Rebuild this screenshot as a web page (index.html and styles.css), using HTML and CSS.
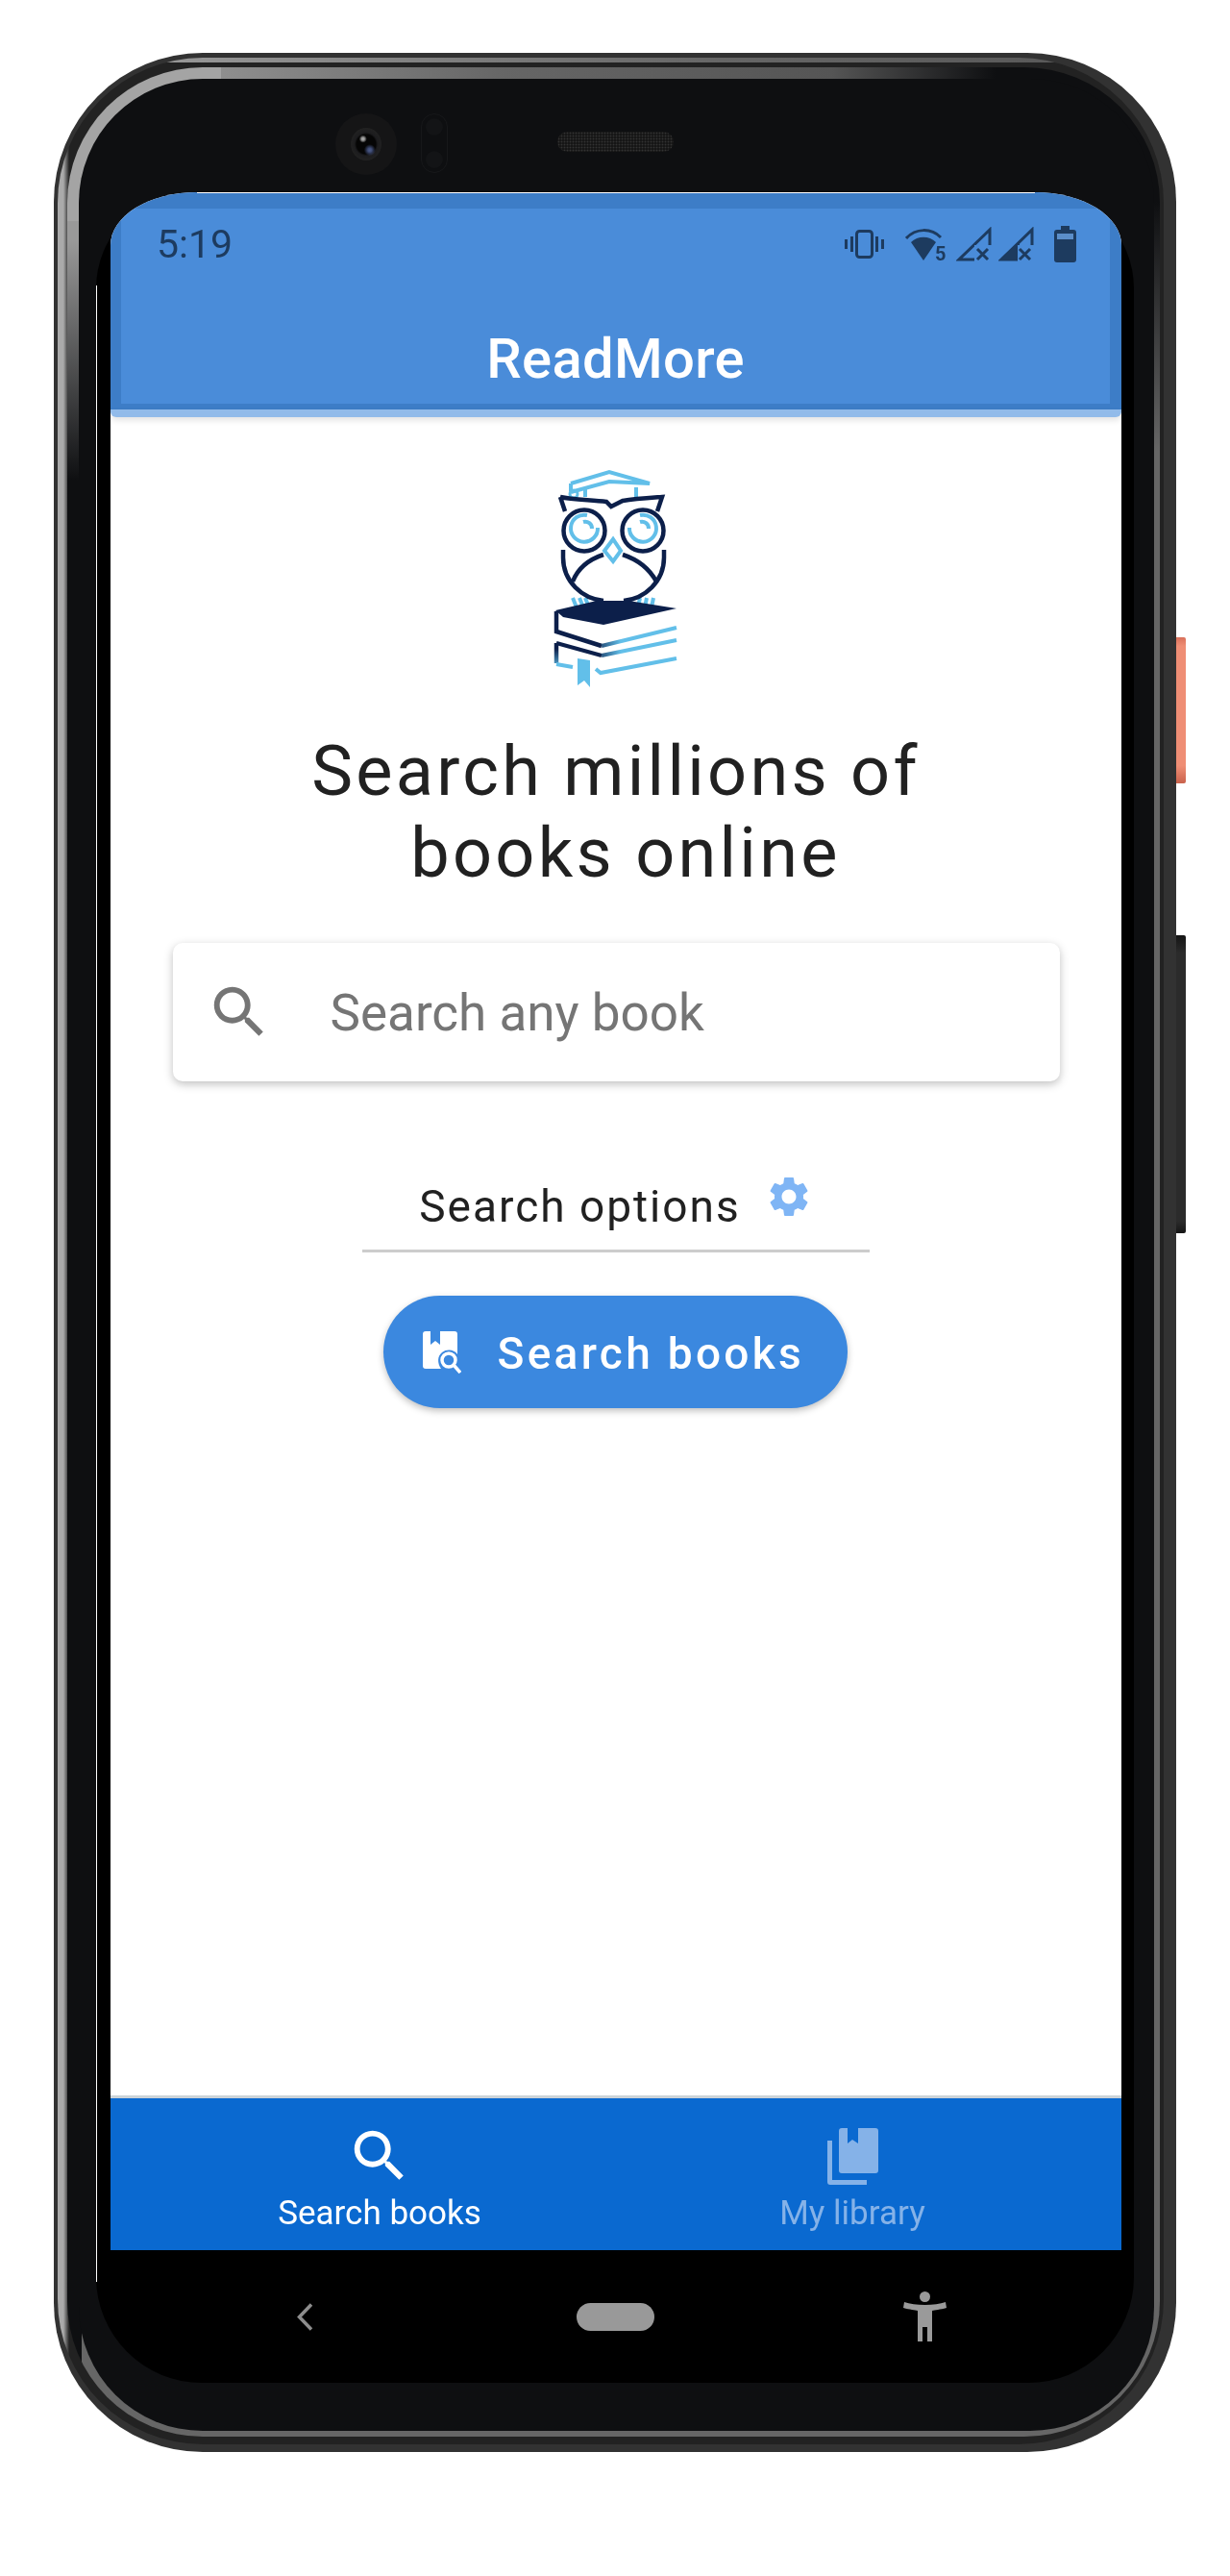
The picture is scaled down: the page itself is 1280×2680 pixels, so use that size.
FILE: index.html
```html
<!DOCTYPE html>
<html>
<head>
	<meta charset="utf-8">
	<title>ReadMore</title>
	<link rel="stylesheet" href="styles.css">
</head>
<body>
	<div class="phone">
		<div class="sideBtn power"></div>
		<div class="sideBtn volume"></div>
		<div class="rim">
			<div class="band">
				<div class="face">
					<div class="earpiece">
						<div class="camera"><div class="lens"></div></div>
						<div class="sensor"><span></span><span></span></div>
						<div class="speaker"></div>
					</div>
					<div class="display">
						<div class="screen">
							<div class="appbar">
								<div class="statusRow">
									<span class="clock">5:19</span>
									<div class="statusIcons">
										<svg class="icoVibrate" width="42" height="30" viewBox="0 0 42 30">
											<rect x="12.5" y="1.5" width="16" height="27" rx="3" fill="none" stroke="#1d3b5f" stroke-width="3"/>
											<path d="M0 10h3v10H0zM6 7h3v16H6zM32 7h3v16h-3zM38 10h3v10h-3z" fill="#1d3b5f"/>
										</svg>
										<svg class="icoWifi" width="44" height="41" viewBox="0 0 44 41">
											<path d="M1 11C11 0 27 0 37 10" fill="none" stroke="#1d3b5f" stroke-width="3"/>
											<path d="M6 15C13 8 25 8 32 15L19 34Z" fill="#1d3b5f"/>
											<text x="31" y="34" class="wifiFive">5</text>
										</svg>
										<svg class="icoSignal" width="37" height="36" viewBox="0 0 37 36">
											<path d="M35 3V34H3Z" fill="none" stroke="#1d3b5f" stroke-width="3"/>
											<rect x="19" y="19" width="18" height="17" fill="#4a8cd9"/>
											<path d="M22 23l11 11M33 23L22 34" stroke="#1d3b5f" stroke-width="3"/>
										</svg>
										<svg class="icoSignal" width="37" height="36" viewBox="0 0 37 36">
											<path d="M35 3V34H3Z" fill="none" stroke="#1d3b5f" stroke-width="3"/>
											<path d="M3 34L22 15V34Z" fill="#1d3b5f"/>
											<rect x="20" y="19" width="17" height="17" fill="#4a8cd9"/>
											<path d="M22 23l11 11M33 23L22 34" stroke="#1d3b5f" stroke-width="3"/>
										</svg>
										<svg class="icoBattery" width="23" height="38" viewBox="0 0 23 38">
											<path d="M7 0h9v4h4c2 0 3 1 3 3v28c0 2-1 3-3 3H3c-2 0-3-1-3-3V7c0-2 1-3 3-3h4z" fill="#1d3b5f"/>
											<rect x="3" y="8" width="17" height="6" fill="#5b8ec9"/>
										</svg>
									</div>
								</div>
								<div class="title">ReadMore</div>
							</div>
							<div class="appbarEdge"></div>

							<div class="content">
								<svg class="logo" width="200" height="260" viewBox="0 0 200 260">
									<defs>
										<linearGradient id="fadeSide" gradientUnits="userSpaceOnUse" x1="75" y1="0" x2="105" y2="0">
											<stop offset="0" stop-color="#0c1f4a"/>
											<stop offset="1" stop-color="#62bfe9"/>
										</linearGradient>
										<linearGradient id="fadeDown" gradientUnits="userSpaceOnUse" x1="0" y1="205" x2="0" y2="226">
											<stop offset="0" stop-color="#0c1f4a"/>
											<stop offset="1" stop-color="#62bfe9"/>
										</linearGradient>
									</defs>
									<g fill="none" stroke="#62bfe9" stroke-width="4">
										<path d="M53 33L93 21L135 33L93 31L53 42"/>
										<path d="M68 38V47M121 37V47"/>
										<path d="M53 33V41"/>
										<circle cx="56" cy="44" r="4" stroke-width="3"/>
										<path d="M88 103L97 91L105 103L97 114Z"/>
										<path d="M70 66A14 14 0 1 0 81 79M66 73A7 7 0 0 1 75 80"/>
										<path d="M125 66A14 14 0 1 1 114 79M125 73A7 7 0 0 1 134 80"/>
										<path d="M55 152L59 162M62 152L66 162M68 152L72 162"/>
										<path d="M123 162L125 152M130 162L132 152M137 162L139 152"/>
									</g>
									<g fill="none" stroke="#0c1f4a" stroke-width="4.5">
										<path d="M42 47L47 62M42 47C55 50 75 50 90 52L95 57L107 51C120 49 135 48 148 47L143 62"/>
										<circle cx="67" cy="82" r="21.5"/>
										<circle cx="128" cy="82" r="21.5"/>
										<path d="M45 102V110C45 135 65 153 87 155M150 102V110C150 135 130 153 108 155"/>
										<path d="M55 135C60 122 72 112 87 107M142 135C135 122 122 112 107 107"/>
									</g>
									<path d="M37 165L80 155H113L163 163L87 180L45 172Z" fill="#0c1f4a"/>
									<path d="M38 166V187L85 202" fill="none" stroke="#0c1f4a" stroke-width="4.5"/>
									<path d="M38 199V220" fill="none" stroke="url(#fadeDown)" stroke-width="4.5"/>
									<path d="M38 199L85 212" fill="none" stroke="#0c1f4a" stroke-width="4"/>
									<path d="M85 202L163 183M85 212L163 196" fill="none" stroke="url(#fadeSide)" stroke-width="4"/>
									<path d="M38 221L55 224M79 226L84 230L163 215" fill="none" stroke="#62bfe9" stroke-width="4"/>
									<path d="M60 215L73 217V245L67 238L60 243Z" fill="#62bfe9"/>
								</svg>
								<h1 class="headline">Search millions of<span class="line2">books online</span></h1>
								<div class="searchBox">
									<svg class="searchIcon" width="70" height="70" viewBox="0 0 24 24">
										<path d="M15.5 14h-.79l-.28-.27C15.41 12.59 16 11.11 16 9.5 16 5.91 13.09 3 9.5 3S3 5.91 3 9.5 5.91 16 9.5 16c1.61 0 3.09-.59 4.23-1.57l.27.28v.79l5 4.99L20.49 19l-4.99-5zm-6 0C7.01 14 5 11.99 5 9.5S7.01 5 9.5 5 14 7.01 14 9.5 11.99 14 9.5 14z" fill="#757575"/>
									</svg>
									<span class="placeholder">Search any book</span>
								</div>
								<div class="options">
									<span class="optionsText">Search options</span>
									<svg class="gear" width="50" height="50" viewBox="0 0 24 24">
										<path d="M19.14 12.94c.04-.3.06-.61.06-.94 0-.32-.02-.64-.07-.94l2.03-1.58c.18-.14.23-.41.12-.61l-1.92-3.32c-.12-.22-.37-.29-.59-.22l-2.39.96c-.5-.38-1.03-.7-1.62-.94l-.36-2.54c-.04-.24-.24-.41-.48-.41h-3.84c-.24 0-.43.17-.47.41l-.36 2.54c-.59.24-1.13.57-1.62.94l-2.39-.96c-.22-.08-.47 0-.59.22L2.74 8.87c-.12.21-.08.47.12.61l2.03 1.58c-.05.3-.09.63-.09.94s.02.64.07.94l-2.03 1.58c-.18.14-.23.41-.12.61l1.92 3.32c.12.22.37.29.59.22l2.39-.96c.5.38 1.03.7 1.62.94l.36 2.54c.05.24.24.41.48.41h3.84c.24 0 .44-.17.47-.41l.36-2.54c.59-.24 1.13-.56 1.62-.94l2.39.96c.22.08.47 0 .59-.22l1.92-3.32c.12-.22.07-.47-.12-.61l-2.01-1.58zM12 15.6c-1.98 0-3.6-1.62-3.6-3.6s1.62-3.6 3.6-3.6 3.6 1.62 3.6 3.6-1.62 3.6-3.6 3.6z" fill="#7fb5f5"/>
									</svg>
								</div>
								<div class="searchBtn">
									<svg class="btnIcon" width="40" height="44" viewBox="0 0 40 44">
										<path d="M3 0H8V14L13 10L18 14V0H33C35 0 36 1 36 3V24C33 19 25 18 20 22C15 26 15 33 19 39H3C1 39 0 38 0 36V3C0 1 1 0 3 0Z" fill="#fff"/>
										<circle cx="27" cy="30" r="7" fill="none" stroke="#fff" stroke-width="3.5"/>
										<path d="M32 35L39 43" stroke="#fff" stroke-width="3.5"/>
									</svg>
									<span class="btnText">Search books</span>
								</div>
							</div>

							<div class="tabs">
								<div class="tab active">
									<svg class="tabIcon" width="70" height="70" viewBox="0 0 24 24">
										<path d="M15.5 14h-.79l-.28-.27C15.41 12.59 16 11.11 16 9.5 16 5.91 13.09 3 9.5 3S3 5.91 3 9.5 5.91 16 9.5 16c1.61 0 3.09-.59 4.23-1.57l.27.28v.79l5 4.99L20.49 19l-4.99-5zm-6 0C7.01 14 5 11.99 5 9.5S7.01 5 9.5 5 14 7.01 14 9.5 11.99 14 9.5 14z" fill="#fff"/>
									</svg>
									<span class="tabLabel">Search books</span>
								</div>
								<div class="tab">
									<svg class="tabIcon" width="53" height="70" viewBox="0 0 53 70">
										<path d="M0 19H5V60H41V65H3C1 65 0 64 0 62Z" fill="#85b2e8"/>
										<path d="M15 6H21V22L26 18L32 22V6H50C52 6 53 7 53 9V50C53 52 52 53 50 53H15C13 53 12 52 12 50V9C12 7 13 6 15 6Z" fill="#85b2e8"/>
									</svg>
									<span class="tabLabel">My library</span>
								</div>
							</div>
						</div>

						<div class="navRow">
							<svg class="navBack" width="17" height="29" viewBox="0 0 17 29">
								<path d="M15 1.5L2.5 14.5L15 27.5" fill="none" stroke="#8d8d8d" stroke-width="3.5"/>
							</svg>
							<div class="navHome"></div>
							<svg class="navA11y" width="45" height="52" viewBox="0 0 45 52">
								<circle cx="22.5" cy="5.5" r="5.5" fill="#9a9a9a"/>
								<path d="M1 11C12 15 33 15 44 11L45 17C38 19 33 19 30 20V52H25V37H20V52H15V20C12 19 7 19 0 17Z" fill="#9a9a9a"/>
							</svg>
						</div>
					</div>
				</div>
			</div>
		</div>
	</div>
</body>
</html>
```

FILE: styles.css
```css
html {
	background: #fff;
}
body {
	margin: 0;
	padding: 55px 0 0 56px;
	background: #fff;
	font-family: Roboto, "Liberation Sans", sans-serif;
}

/* phone body, from the outside in */
.phone {
	position: relative;
	box-sizing: border-box;
	width: 1168px;
	height: 2496px;
	padding: 5px 13px 8px 4px;
	border-radius: 155px;
	background: #323232;
}
.sideBtn {
	position: absolute;
	right: -10px;
	width: 10px;
	border-radius: 0 2px 2px 0;
}
.sideBtn.power {
	top: 608px;
	height: 152px;
	background: linear-gradient(to bottom, #d9705a, #ef8e75 6%, #ef8e75 88%, #c9624c);
}
.sideBtn.volume {
	top: 918px;
	height: 310px;
	background: linear-gradient(to bottom, #151515, #2b2b2b 6%, #2b2b2b 96%, #151515);
}
.rim {
	box-sizing: border-box;
	height: 100%;
	padding: 10px 4px 8px 10px;
	border-radius: 151px;
	background:
		linear-gradient(to right, #a0a0a0, #888 25%, #666 60%, #555) 0 0 / 100% 5px no-repeat,
		linear-gradient(to right, #aaa 0, #aaa 6px, #222 12px) 0 0 / 100% 100% no-repeat;
}
.band {
	box-sizing: border-box;
	height: 100%;
	padding: 12px 6px 6px 12px;
	border-radius: 141px;
	background:
		linear-gradient(#a4a4a4, #a4a4a4) 0 0 / 160px 160px no-repeat,
		linear-gradient(to bottom, #999 0, #999 180px, #0e0f11 430px) 0 0 / 15px 100% no-repeat,
		linear-gradient(to right, #a4a4a4, #666 40%, #555 70%, #0e0f11 85%) 0 0 / 100% 12px no-repeat,
		linear-gradient(to bottom, #0e0f11 140px, #666 400px);
}
.face {
	display: flex;
	flex-direction: column;
	box-sizing: border-box;
	height: 100%;
	border-radius: 129px;
	background: #0e0f11;
}

/* camera and speaker */
.earpiece {
	display: flex;
	flex: none;
	align-items: flex-start;
	box-sizing: border-box;
	height: 118px;
	padding: 36px 0 0 267px;
}
.camera {
	display: flex;
	align-items: center;
	justify-content: center;
	width: 64px;
	height: 64px;
	border-radius: 50%;
	background: #151516;
}
.lens {
	width: 32px;
	height: 34px;
	border-radius: 50%;
	background:
		radial-gradient(circle at 40% 34%, #aaa 0, #999 1.5px, transparent 4px),
		radial-gradient(circle at 62% 68%, #4d5b86 0, #3f4c76 2px, transparent 6px),
		radial-gradient(circle, #050505 0, #050505 10px, #1c1c1e 12px, #222 17px);
}
.sensor {
	display: flex;
	flex-direction: column;
	justify-content: space-between;
	box-sizing: border-box;
	width: 28px;
	height: 62px;
	margin-left: 25px;
	padding: 4px;
	border: 1px solid #17181a;
	border-radius: 14px;
}
.sensor span {
	display: block;
	width: 18px;
	height: 18px;
	border-radius: 50%;
	background: #131416;
}
.speaker {
	width: 121px;
	height: 21px;
	margin: 19px 0 0 114px;
	border-radius: 11px;
	background: radial-gradient(circle, #333 0.6px, #161616 1.2px) 0 0 / 3px 3px;
}

/* black panel behind the screen */
.display {
	position: relative;
	display: flex;
	flex: 1;
	flex-direction: column;
	margin: 0 21px 50px 18px;
	border-radius: 100px 100px 110px 110px;
	background: #000;
}
.display::before {
	content: "";
	position: absolute;
	top: 97px;
	bottom: 105px;
	left: 0;
	width: 1px;
	background: #fff;
}
.screen {
	position: relative;
	display: flex;
	flex-direction: column;
	height: 2141px;
	margin: 0 13px 0 15px;
	border-radius: 90px 90px 0 0 / 55px 55px 0 0;
	background: #fff;
}
.screen::before {
	content: "";
	position: absolute;
	z-index: 1;
	top: 0;
	left: 90px;
	right: 90px;
	height: 1px;
	background: #fff;
}

/* app bar */
.appbar {
	flex: none;
	box-sizing: border-box;
	height: 226px;
	padding: 17px 12px 6px 11px;
	border-radius: 90px 90px 0 0 / 55px 55px 0 0;
	background:
		linear-gradient(#3d7dc7, #3d7dc7) 0 0 / 100% 17px no-repeat,
		linear-gradient(#3d7dc7, #3d7dc7) 0 100% / 100% 6px no-repeat,
		linear-gradient(#3d7dc7, #3d7dc7) 0 0 / 11px 100% no-repeat,
		linear-gradient(#3d7dc7, #3d7dc7) 100% 0 / 12px 100% no-repeat,
		#4a8cd9;
}
.statusRow {
	display: flex;
	align-items: center;
	justify-content: space-between;
	height: 66px;
	padding: 4px 35px 0 37px;
}
.clock {
	color: #1d3b5f;
	font-size: 41px;
	filter: blur(0.5px);
}
.statusIcons {
	display: flex;
	align-items: center;
	filter: blur(0.5px);
}
.icoVibrate { margin-right: 21px; }
.icoWifi { margin: 0 9px -6px 0; }
.icoSignal { margin-right: 7px; }
.icoBattery { margin-left: 14px; }
.wifiFive {
	fill: #1d3b5f;
	font-size: 20px;
	font-weight: 700;
}
.title {
	padding-top: 52px;
	color: #fff;
	font-size: 58px;
	font-weight: 500;
	letter-spacing: 0.3px;
	line-height: 68px;
	text-align: center;
	filter: blur(0.5px);
}
.appbarEdge {
	flex: none;
	height: 8px;
	border-radius: 0 0 6px 6px;
	background: #92bbea;
	box-shadow: 0 3px 6px rgba(0, 0, 0, 0.12);
}

/* main content */
.content {
	display: flex;
	flex: 1;
	flex-direction: column;
	align-items: center;
}
.logo {
	flex: none;
	margin-top: 36px;
	filter: blur(0.6px);
}
.headline {
	margin: 30px 0 0;
	color: #212121;
	font-size: 72px;
	font-weight: 400;
	letter-spacing: 3.3px;
	line-height: 85px;
	text-align: center;
	filter: blur(0.5px);
}
.line2 {
	display: block;
	padding-left: 20px;
}
.searchBox {
	display: flex;
	align-items: center;
	box-sizing: border-box;
	width: 923px;
	height: 144px;
	margin-top: 51px;
	padding-left: 34px;
	border-radius: 10px;
	background: #fff;
	box-shadow: 0 3px 10px rgba(0, 0, 0, 0.25);
}
.searchIcon {
	margin-right: 60px;
	filter: blur(0.5px);
}
.placeholder {
	padding-top: 2px;
	color: #757575;
	font-size: 53px;
	filter: blur(0.5px);
}
.options {
	display: flex;
	align-items: flex-start;
	justify-content: center;
	box-sizing: border-box;
	width: 528px;
	height: 178px;
	padding-top: 100px;
	border-bottom: 3px solid #ccc;
}
.optionsText {
	color: #212121;
	font-size: 46px;
	letter-spacing: 2px;
	line-height: 60px;
	filter: blur(0.5px);
}
.gear {
	margin: -5px 0 0 25px;
	filter: blur(0.5px);
}
.searchBtn {
	display: flex;
	align-items: center;
	box-sizing: border-box;
	width: 483px;
	height: 117px;
	margin: 45px 2px 0 0;
	padding-left: 41px;
	border-radius: 59px;
	background: #3b88df;
	box-shadow: 0 3px 7px rgba(0, 0, 0, 0.25);
}
.btnIcon {
	margin-right: 38px;
	filter: blur(0.5px);
}
.btnText {
	padding-top: 2px;
	color: #fff;
	font-size: 46px;
	font-weight: 500;
	letter-spacing: 3.3px;
	filter: blur(0.5px);
}

/* bottom navigation */
.tabs {
	display: grid;
	flex: none;
	grid-template-columns: 492px 492px;
	justify-content: center;
	box-sizing: border-box;
	height: 161px;
	border-top: 3px solid #ccd3d8;
	background: #0a69d0;
}
.tab {
	display: flex;
	flex-direction: column;
	align-items: center;
	padding-top: 25px;
	color: #85b2e8;
}
.tab.active {
	color: #fff;
}
.tabIcon {
	flex: none;
	height: 70px;
	filter: blur(0.5px);
}
.tabLabel {
	margin-top: 5px;
	font-size: 35px;
	line-height: 40px;
	filter: blur(0.5px);
}

/* android nav buttons */
.navRow {
	display: flex;
	flex: 1;
	align-items: center;
	padding-left: 209px;
}
.navHome {
	width: 81px;
	height: 29px;
	margin-left: 274px;
	border-radius: 15px;
	background: #999;
}
.navA11y {
	margin-left: 259px;
}
```
